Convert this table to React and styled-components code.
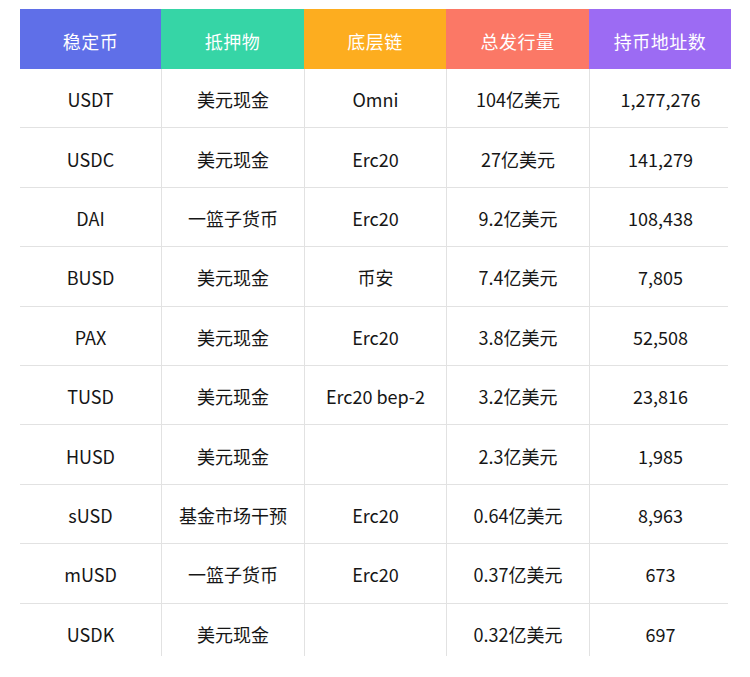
import React from "react"
import styled, { createGlobalStyle } from "styled-components"

const GlobalStyle = createGlobalStyle`
  html, body {
    margin: 0;
    padding: 0;
    background: #ffffff;
  }
  body {
    font-family: "Noto Sans CJK SC", "Noto Sans", sans-serif;
  }
`

const Page = styled.div`
  width: 750px;
  height: 677px;
  padding: 9px 0 0 20px;
  box-sizing: border-box;
`

const Table = styled.div`
  width: 711px;
  height: 647px;
  overflow: hidden;
`

const HeadRow = styled.div`
  display: grid;
  grid-template-columns: 141px 143px 142px 143px 142px;
  height: 60px;
`

const HeadCell = styled.div`
  display: flex;
  align-items: center;
  justify-content: center;
  padding-top: 3px;
  box-sizing: border-box;
  background: ${(p) => p.$bg};
  color: #ffffff;
  font-size: 18px;
  letter-spacing: 0.5px;
`

const Row = styled.div`
  display: grid;
  grid-template-columns: 141px 143px 142px 143px 142px;
  height: 59.4px;
  box-sizing: border-box;
  border-bottom: ${(p) => (p.$last ? "none" : "1px solid #e2e2e2")};
  margin-right: 3px;
`

const Cell = styled.div`
  display: flex;
  align-items: center;
  justify-content: center;
  padding-top: 2px;
  box-sizing: border-box;
  border-left: ${(p) => (p.$first ? "none" : "1px solid #e2e2e2")};
  color: #161616;
  font-size: 18px;
`

const columns = [
  { title: "稳定币", color: "#5f6fe8" },
  { title: "抵押物", color: "#36d5a6" },
  { title: "底层链", color: "#fdad1f" },
  { title: "总发行量", color: "#fb7866" },
  { title: "持币地址数", color: "#9c6bf3" },
]

const rows = [
  ["USDT", "美元现金", "Omni", "104亿美元", "1,277,276"],
  ["USDC", "美元现金", "Erc20", "27亿美元", "141,279"],
  ["DAI", "一篮子货币", "Erc20", "9.2亿美元", "108,438"],
  ["BUSD", "美元现金", "币安", "7.4亿美元", "7,805"],
  ["PAX", "美元现金", "Erc20", "3.8亿美元", "52,508"],
  ["TUSD", "美元现金", "Erc20 bep-2", "3.2亿美元", "23,816"],
  ["HUSD", "美元现金", "", "2.3亿美元", "1,985"],
  ["sUSD", "基金市场干预", "Erc20", "0.64亿美元", "8,963"],
  ["mUSD", "一篮子货币", "Erc20", "0.37亿美元", "673"],
  ["USDK", "美元现金", "", "0.32亿美元", "697"],
]

export default function App() {
  return (
    <>
      <GlobalStyle />
      <Page>
        <Table>
          <HeadRow>
            {columns.map((c) => (
              <HeadCell key={c.title} $bg={c.color}>
                {c.title}
              </HeadCell>
            ))}
          </HeadRow>
          {rows.map((r, i) => (
            <Row key={r[0]} $last={i === rows.length - 1}>
              {r.map((v, j) => (
                <Cell key={j} $first={j === 0}>
                  {v}
                </Cell>
              ))}
            </Row>
          ))}
        </Table>
      </Page>
    </>
  )
}
